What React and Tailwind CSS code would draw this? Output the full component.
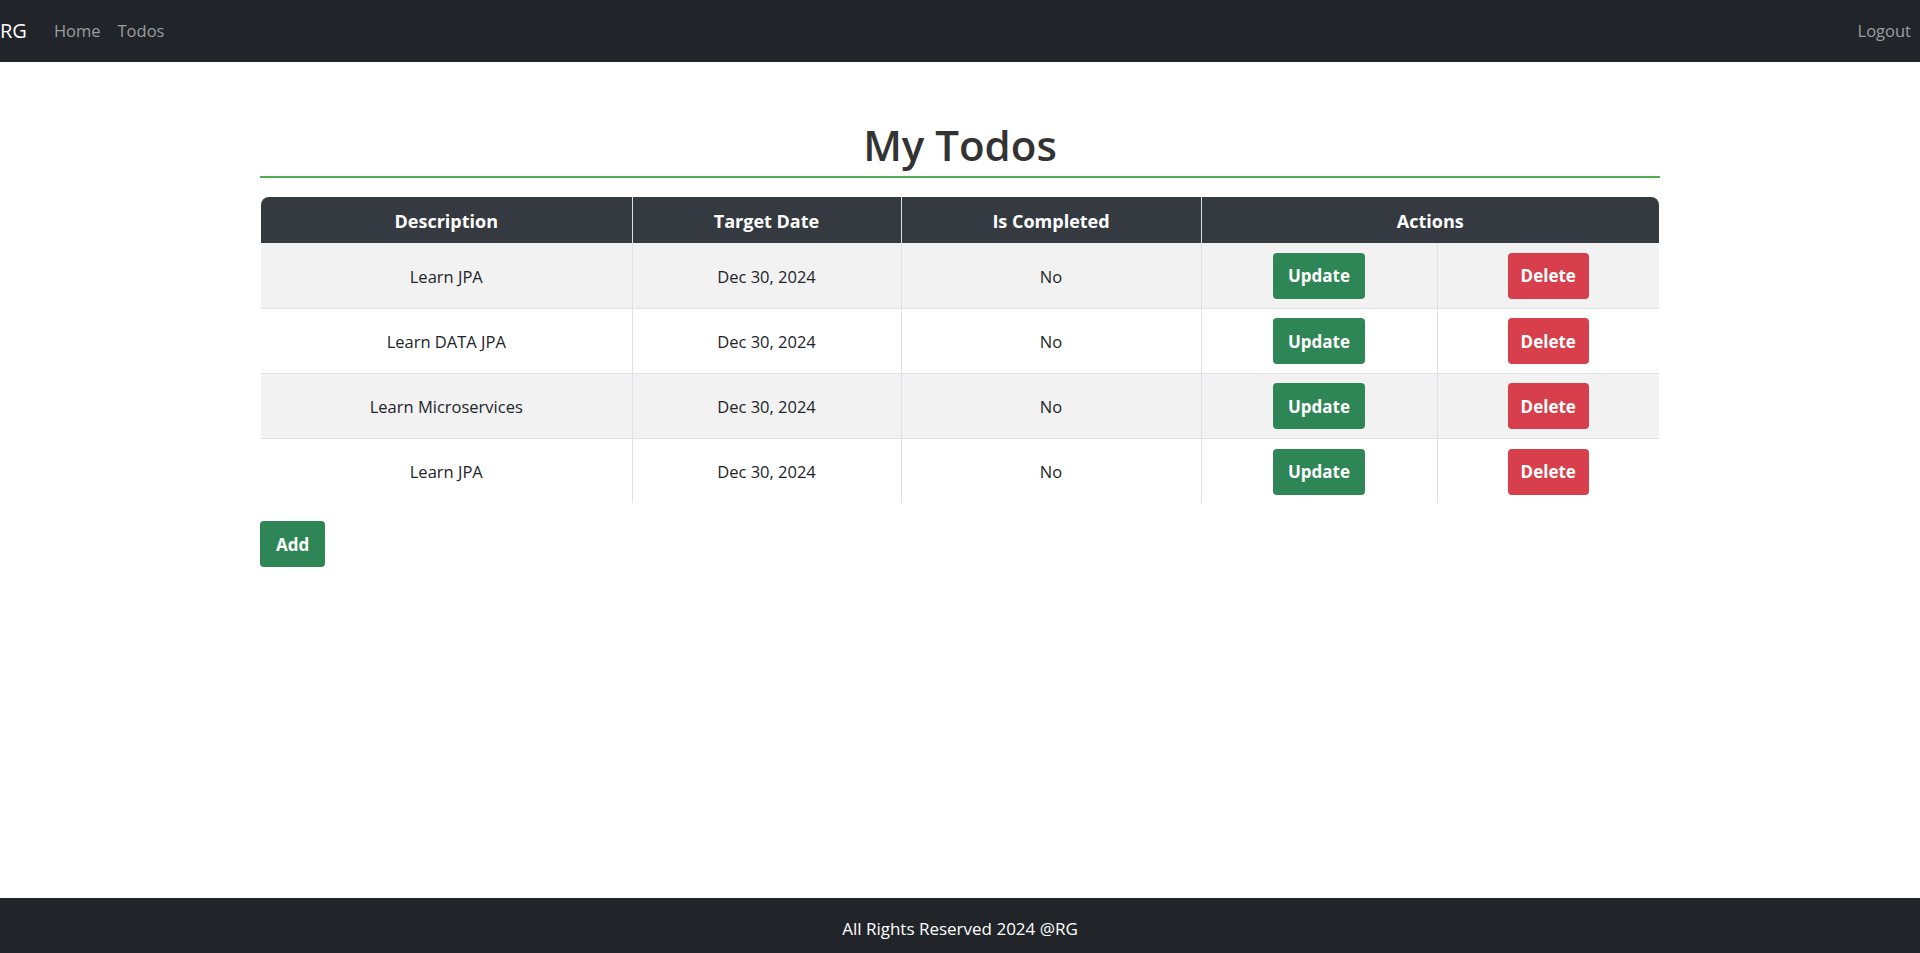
import React from 'react';

const todos = [
    { id: 1, description: 'Learn JPA', targetDate: 'Dec 30, 2024', done: false },
    { id: 2, description: 'Learn DATA JPA', targetDate: 'Dec 30, 2024', done: false },
    { id: 3, description: 'Learn Microservices', targetDate: 'Dec 30, 2024', done: false },
    { id: 4, description: 'Learn JPA', targetDate: 'Dec 30, 2024', done: false },
];

const Header = () => (
    <header className="h-[62px] bg-[#212529] flex items-center justify-between pr-[9px]">
        <div className="flex items-center">
            <span className="text-[20px] text-white mr-[27px]">RG</span>
            <nav className="flex items-center gap-[17px] text-[16.5px] text-[#9a9da0]">
                <a href="#">Home</a>
                <a href="#">Todos</a>
            </nav>
        </div>
        <a href="#" className="text-[16.5px] text-[#9a9da0]">Logout</a>
    </header>
);

const Footer = () => (
    <footer className="h-[55px] bg-[#212529] flex items-center justify-center pt-[6px] text-white text-[17px]">
        All Rights Reserved 2024 @RG
    </footer>
);

export default function App() {
    return (
        <div className="min-h-screen flex flex-col bg-white text-[#212529]" style={{ fontFamily: '"Open Sans", "Noto Sans", sans-serif' }}>
            <Header />

            <main className="flex-1">
                <div className="w-[1400px] mx-auto">
                    {/* Title */}
                    <h1 className="text-center text-[42px] font-semibold text-[#333] leading-[1.2] pt-[58px] pb-[6px] border-b-2 border-[#4caf50]">
                        My Todos
                    </h1>

                    {/* Table */}
                    <div className="mt-[19px] px-[1px]">
                        <table className="w-full border-collapse text-[16.5px] text-center">
                            <thead>
                                <tr className="bg-[#343a40] text-white text-[18px] font-bold h-[46px]">
                                    <th className="w-[371px] pt-[2px] rounded-tl-[8px] border-r border-[#dee2e6]">Description</th>
                                    <th className="w-[269px] pt-[2px] border-r border-[#dee2e6]">Target Date</th>
                                    <th className="w-[300px] pt-[2px] border-r border-[#dee2e6]">Is Completed</th>
                                    <th colSpan={2} className="pt-[2px] rounded-tr-[8px]">Actions</th>
                                </tr>
                            </thead>
                            <tbody>
                                {todos.map((todo, i) => (
                                    <tr key={todo.id} className={`h-[65px] ${i % 2 === 0 ? 'bg-[#f2f2f2]' : 'bg-white'} ${i < todos.length - 1 ? 'border-b border-[#dee2e6]' : ''}`}>
                                        <td className="pt-[3px] border-r border-[#dee2e6]">{todo.description}</td>
                                        <td className="pt-[3px] border-r border-[#dee2e6]">{todo.targetDate}</td>
                                        <td className="pt-[3px] border-r border-[#dee2e6]">{todo.done ? 'Yes' : 'No'}</td>
                                        <td className="w-[236px] pt-[1px] border-r border-[#dee2e6]">
                                            <button className="h-[46px] px-[15px] rounded-[4px] bg-[#2e8555] text-white text-[17px] font-bold">Update</button>
                                        </td>
                                        <td className="pt-[1px]">
                                            <button className="h-[46px] px-[13px] rounded-[4px] bg-[#d63f4b] text-white text-[17px] font-bold">Delete</button>
                                        </td>
                                    </tr>
                                ))}
                            </tbody>
                        </table>
                    </div>

                    <button className="mt-[18px] h-[46px] px-[16px] rounded-[4px] bg-[#2e8555] text-white text-[17px] font-bold">Add</button>
                </div>
            </main>

            <Footer />
        </div>
    );
}
